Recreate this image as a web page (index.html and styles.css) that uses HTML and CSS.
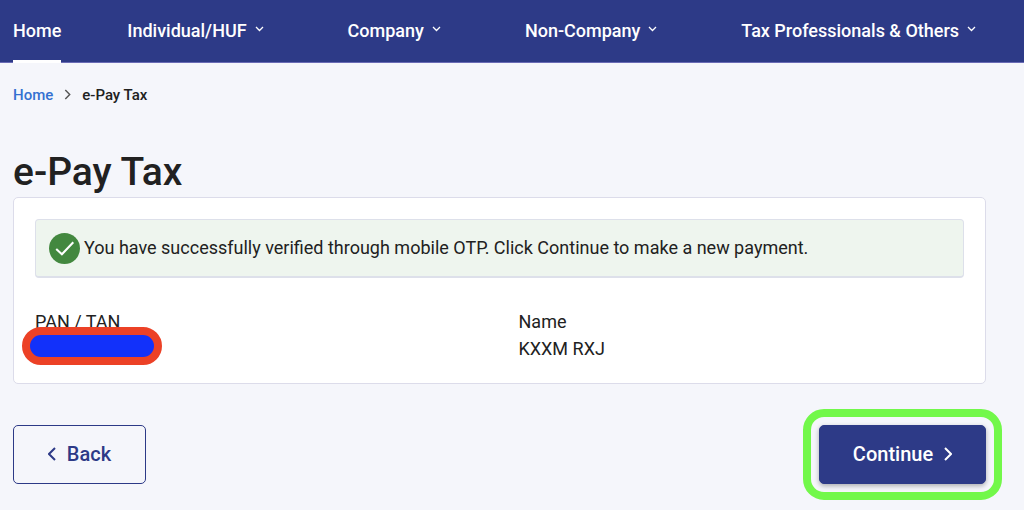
FILE: index.html
```
<!DOCTYPE html>
<html lang="en">
<head>
  <meta charset="UTF-8">
  <meta name="viewport" content="width=device-width, initial-scale=1">
  <title>e-Pay Tax</title>
  <link rel="stylesheet" href="styles.css">
</head>
<body>

  <nav class="navbar">
    <a href="#" class="nav-link active">Home</a>
    <div class="nav-menus">
      <a href="#" class="nav-link">Individual/HUF
        <svg class="caret" viewBox="0 0 9 6"><path d="M1 1l3.500 3.500L8 1"/></svg>
      </a>
      <a href="#" class="nav-link">Company
        <svg class="caret" viewBox="0 0 9 6"><path d="M1 1l3.500 3.500L8 1"/></svg>
      </a>
      <a href="#" class="nav-link">Non-Company
        <svg class="caret" viewBox="0 0 9 6"><path d="M1 1l3.500 3.500L8 1"/></svg>
      </a>
      <a href="#" class="nav-link">Tax Professionals &amp; Others
        <svg class="caret" viewBox="0 0 9 6"><path d="M1 1l3.500 3.500L8 1"/></svg>
      </a>
    </div>
  </nav>

  <main>
    <div class="breadcrumb">
      <a href="#">Home</a>
      <svg class="separator" viewBox="0 0 6 10"><path d="M1 1l4 4-4 4"/></svg>
      <span>e-Pay Tax</span>
    </div>

    <h1>e-Pay Tax</h1>

    <section class="card">
      <div class="alert">
        <svg class="alert-icon" viewBox="0 0 30 30">
          <circle cx="15" cy="15" r="15"/>
          <path d="M7 15.500l5.500 5L23.500 9"/>
        </svg>
        <p>You have successfully verified through mobile OTP. Click Continue to make a new payment.</p>
      </div>

      <dl class="details">
        <div>
          <dt>PAN / TAN</dt>
          <dd><span class="redacted"></span></dd>
        </div>
        <div>
          <dt>Name</dt>
          <dd>KXXM RXJ</dd>
        </div>
      </dl>
    </section>

    <div class="buttons">
      <button type="button" class="btn back">
        <svg class="arrow" viewBox="0 0 8 14"><path d="M7 1L1 7l6 6"/></svg>
        Back
      </button>
      <button type="button" class="btn continue">
        Continue
        <svg class="arrow" viewBox="0 0 8 14"><path d="M1 1l6 6-6 6"/></svg>
      </button>
    </div>
  </main>

</body>
</html>
```
FILE: styles.css
```
* {
  box-sizing: border-box;
}
body {
  margin: 0;
  background: #f5f6fb;
  color: #212121;
  font-family: Roboto, "Liberation Sans", sans-serif;
  font-size: 18px;
  line-height: 27px;
}
svg {
  fill: none;
  stroke: currentColor;
  flex: none;
}
.navbar {
  display: flex;
  gap: 66px;
  height: 63px;
  padding: 0 13px;
  background: #2d3a87;
  border-bottom: 1px solid #6a6bb5;
}
.nav-menus {
  display: flex;
  gap: 84px;
}
.nav-link {
  display: flex;
  align-items: center;
  gap: 8px;
  margin-bottom: -1px;
  border-bottom: 3px solid transparent;
  color: white;
  font-weight: 500;
  text-decoration: none;
  white-space: nowrap;
}
.nav-link.active {
  border-bottom-color: white;
}
.caret {
  width: 9px;
  height: 6px;
  margin-bottom: 2px;
  stroke-width: 1.3;
}
main {
  padding: 20px 38px 26px 13px;
}
.breadcrumb {
  display: flex;
  align-items: center;
  gap: 11px;
  font-size: 15px;
  font-weight: 500;
  line-height: 24px;
}
.breadcrumb a {
  color: #3470d1;
  text-decoration: none;
}
.separator {
  width: 7px;
  height: 11px;
  margin-bottom: 2px;
  color: #555;
  stroke-width: 1.3;
}
h1 {
  margin: 40px 0 0;
  font-size: 39px;
  font-weight: 500;
  line-height: 50px;
}
.card {
  padding: 21px;
  background: white;
  border: 1px solid #dcdcea;
  border-radius: 5px;
}
.alert {
  display: flex;
  align-items: center;
  gap: 4px;
  min-height: 59px;
  padding: 0 13px;
  background: #eef5ee;
  border: 1px solid #dde0ea;
  border-bottom-width: 2px;
  border-radius: 4px;
}
.alert p {
  margin: 0;
  padding-bottom: 2px;
}
.alert-icon {
  width: 31px;
  height: 31px;
}
.alert-icon circle {
  fill: #43883f;
  stroke: none;
}
.alert-icon path {
  stroke: white;
  stroke-width: 2;
}
.details {
  display: grid;
  grid-template-columns: 1fr 1fr;
  gap: 38px;
  margin: 30px 0 0;
}
.details dd {
  position: relative;
  min-height: 27px;
  margin: 0;
}
/* covers the account number */
.redacted {
  position: absolute;
  top: -8px;
  left: -13px;
  width: 140px;
  height: 38px;
  background: #1231fa;
  border: 8px solid #ec4126;
  border-radius: 19px;
}
.buttons {
  display: flex;
  justify-content: space-between;
  margin-top: 41px;
}
.btn {
  display: flex;
  align-items: center;
  justify-content: center;
  height: 59px;
  padding-bottom: 2px;
  border: 1px solid #2d3a87;
  border-radius: 5px;
  font-family: inherit;
  font-size: 20px;
  font-weight: 500;
  cursor: pointer;
}
.back {
  gap: 11px;
  width: 133px;
  background: transparent;
  color: #2d3a87;
}
.continue {
  gap: 11px;
  width: 167px;
  background: #2d3a87;
  color: white;
  box-shadow: 0 2px 5px rgba(0, 0, 0, 0.3);
  outline: 8px solid #72f84a;
  outline-offset: 8px;
}
.arrow {
  width: 8px;
  height: 14px;
  stroke-width: 2;
}
```
